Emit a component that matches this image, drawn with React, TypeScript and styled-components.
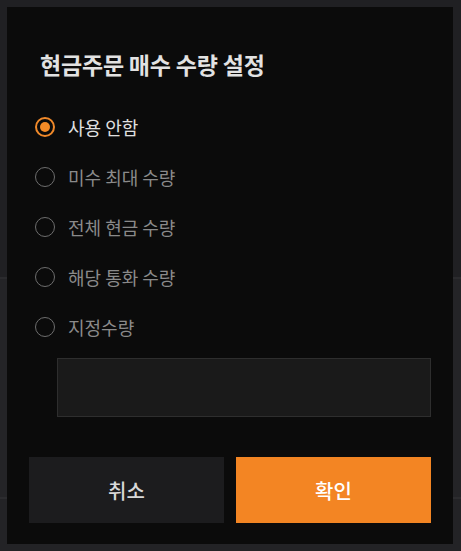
import React, { useState } from "react";
import styled, { createGlobalStyle } from "styled-components";

const GlobalStyle = createGlobalStyle`
  html, body {
    margin: 0;
    padding: 0;
    background: #222225;
  }
  * { box-sizing: border-box; }
`;

const Backdrop = styled.div`
  width: 461px;
  height: 551px;
  padding: 7px 8px 7px 7px;
  background: linear-gradient(
    to bottom,
    #202023 0px,
    #202023 277px,
    #2b2b2e 277px,
    #2b2b2e 279px,
    #242427 279px,
    #242427 497px,
    #2c2c2f 497px,
    #2c2c2f 499px,
    #232326 499px
  );
  font-family: "Noto Sans CJK KR", "Noto Sans", sans-serif;
`;

const Dialog = styled.div`
  width: 446px;
  height: 537px;
  background: #0b0b0b;
  display: flex;
  flex-direction: column;
  padding: 42px 22px 21px 22px;
`;

const Title = styled.h2`
  margin: 0 0 0 11px;
  font-size: 23px;
  line-height: 30px;
  font-weight: 700;
  color: #e2e2e2;
  letter-spacing: -0.2px;
`;

const OptionList = styled.div`
  display: flex;
  flex-direction: column;
  margin-top: 23px;
`;

const OptionRow = styled.label`
  display: flex;
  align-items: center;
  height: 50px;
  padding-left: 6px;
  gap: 13px;
  cursor: pointer;
`;

const RadioCircle = styled.span<{ $checked: boolean }>`
  width: 20px;
  height: 20px;
  border-radius: 50%;
  border: ${(p) => (p.$checked ? "2px solid #f0892a" : "1.5px solid #6e6e6e")};
  display: flex;
  align-items: center;
  justify-content: center;
  flex-shrink: 0;
  &::after {
    content: "";
    display: ${(p) => (p.$checked ? "block" : "none")};
    width: 10px;
    height: 10px;
    border-radius: 50%;
    background: #f58b26;
  }
`;

const OptionText = styled.span<{ $checked: boolean }>`
  font-size: 18px;
  line-height: 24px;
  color: ${(p) => (p.$checked ? "#e0e0e0" : "#8a8a8a")};
  font-weight: 400;
`;

const AmountInput = styled.input`
  margin: 6px 0 0 28px;
  width: 374px;
  height: 60px;
  background: #1a1a1a;
  border: 1px solid #2e2e2e;
  outline: none;
  color: #e0e0e0;
  font-family: inherit;
  font-size: 16px;
  padding: 0 14px;
`;

const ButtonRow = styled.div`
  display: grid;
  grid-template-columns: 195px 195px;
  gap: 12px;
  margin-top: 40px;
`;

const ActionButton = styled.button<{ $primary?: boolean }>`
  height: 66px;
  border: none;
  background: ${(p) => (p.$primary ? "#f38523" : "#1c1c1e")};
  color: ${(p) => (p.$primary ? "#ffffff" : "#d8d8d8")};
  font-family: inherit;
  font-size: 20px;
  font-weight: 500;
  cursor: pointer;
`;

const options = ["사용 안함", "미수 최대 수량", "전체 현금 수량", "해당 통화 수량", "지정수량"];

export default function App() {
  const [selected, setSelected] = useState(0);
  return (
    <>
      <GlobalStyle />
      <Backdrop>
        <Dialog>
          <Title>현금주문 매수 수량 설정</Title>
          <OptionList>
            {options.map((o, i) => (
              <OptionRow key={o} onClick={() => setSelected(i)}>
                <RadioCircle $checked={selected === i} />
                <OptionText $checked={selected === i}>{o}</OptionText>
              </OptionRow>
            ))}
          </OptionList>
          <AmountInput />
          <ButtonRow>
            <ActionButton>취소</ActionButton>
            <ActionButton $primary>확인</ActionButton>
          </ButtonRow>
        </Dialog>
      </Backdrop>
    </>
  );
}
